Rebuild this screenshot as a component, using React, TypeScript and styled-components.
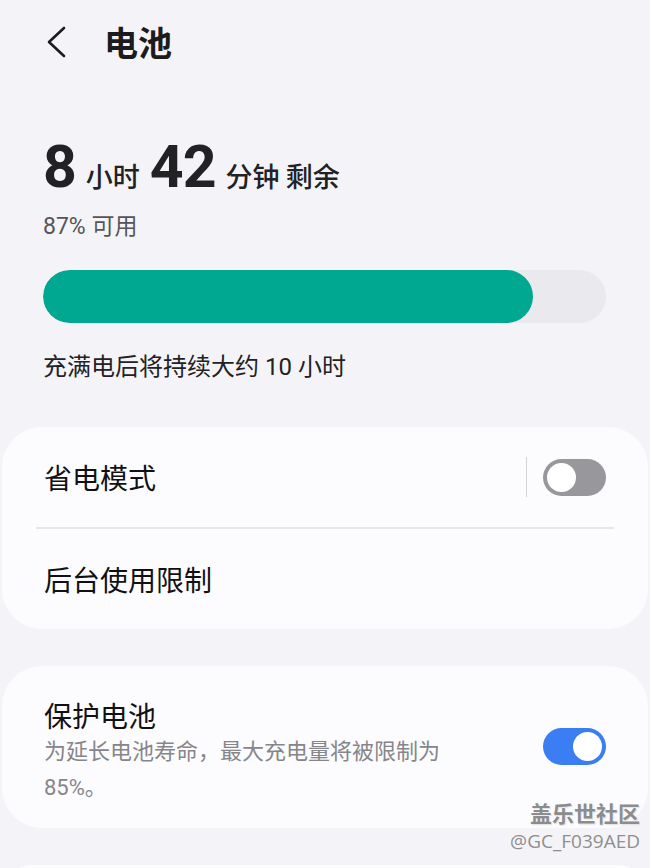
import styled, { createGlobalStyle } from 'styled-components';

const GlobalStyle = createGlobalStyle`
  html, body {
    margin: 0;
    padding: 0;
    background: #f4f4f8;
  }
  body {
    font-family: Roboto, "Noto Sans CJK SC", sans-serif;
    color: #1c1c1e;
  }
`;

type SwitchProps = {
  on?: boolean;
};

function Switch({ on }: SwitchProps) {
  return (
    <StyledSwitch on={on}>
      <StyledKnob on={on} />
    </StyledSwitch>
  );
}

function App() {
  return (
    <StyledPage>
      <GlobalStyle />
      <StyledHeader>
        <StyledBack aria-label="back">
          <svg width="24" height="32" viewBox="0 0 24 32">
            <path
              d="M20 2 L5 16 L20 30"
              fill="none"
              stroke="#1c1c1e"
              strokeWidth="2.6"
              strokeLinecap="round"
              strokeLinejoin="round"
            />
          </svg>
        </StyledBack>
        <StyledTitle>电池</StyledTitle>
      </StyledHeader>

      <StyledSummary>
        <StyledTime>
          <StyledNumber>8</StyledNumber>
          <StyledUnit>小时</StyledUnit>
          <StyledNumber>42</StyledNumber>
          <StyledUnit>分钟 剩余</StyledUnit>
        </StyledTime>
        <StyledAvailable>87% 可用</StyledAvailable>
        <StyledTrack>
          <StyledFill style={{ width: '87%' }} />
        </StyledTrack>
        <StyledEstimate>充满电后将持续大约 10 小时</StyledEstimate>
      </StyledSummary>

      <StyledCard>
        <StyledRow>
          <StyledLabel>省电模式</StyledLabel>
          <StyledControls>
            <StyledVDivider />
            <Switch />
          </StyledControls>
        </StyledRow>
        <StyledDivider />
        <StyledRow>
          <StyledLabel>后台使用限制</StyledLabel>
        </StyledRow>
      </StyledCard>

      <StyledCard>
        <StyledTallRow>
          <StyledTextBlock>
            <StyledLabel>保护电池</StyledLabel>
            <StyledHint>为延长电池寿命，最大充电量将被限制为 85%。</StyledHint>
          </StyledTextBlock>
          <StyledSwitchSlot>
            <Switch on />
          </StyledSwitchSlot>
        </StyledTallRow>
      </StyledCard>

      <StyledCard />

      <StyledWatermark>
        <StyledMarkTitle>盖乐世社区</StyledMarkTitle>
        <StyledMarkUser>@GC_F039AED</StyledMarkUser>
      </StyledWatermark>
    </StyledPage>
  );
}

const StyledPage = styled.div`
  position: relative;
  width: 650px;
  height: 868px;
  overflow: hidden;
  background: #f4f4f8;
`;

const StyledHeader = styled.div`
  display: flex;
  align-items: center;
  height: 44px;
  padding: 20px 0 0 44px;
`;

const StyledBack = styled.div`
  display: flex;
  width: 24px;
  margin-right: 36px;
`;

const StyledTitle = styled.h1`
  margin: 0;
  font-size: 34px;
  font-weight: 700;
  font-family: "Noto Sans CJK SC", sans-serif;
  line-height: 44px;
`;

const StyledSummary = styled.div`
  padding: 71px 44px 0 43px;
`;

const StyledTime = styled.div`
  display: flex;
  align-items: baseline;
  height: 64px;
  color: #222224;
`;

const StyledNumber = styled.span`
  font-size: 59px;
  font-weight: 700;
  font-family: Roboto, Inter, sans-serif;
  letter-spacing: -1px;
  line-height: 64px;
  margin-right: 10px;
`;

const StyledUnit = styled.span`
  font-size: 27px;
  font-weight: 500;
  font-family: "Noto Sans CJK SC", sans-serif;
  margin-right: 10px;
`;

const StyledAvailable = styled.div`
  margin-top: 14px;
  font-size: 23px;
  line-height: 28px;
  color: #555558;
  font-family: Roboto, "Noto Sans CJK SC", sans-serif;
`;

const StyledTrack = styled.div`
  margin-top: 29px;
  width: 563px;
  height: 53px;
  border-radius: 27px;
  background: #eaeaee;
  overflow: hidden;
`;

const StyledFill = styled.div`
  height: 100%;
  border-radius: 27px;
  background: #00a892;
`;

const StyledEstimate = styled.div`
  margin-top: 29px;
  font-size: 24px;
  line-height: 30px;
  color: #222224;
`;

const StyledCard = styled.div`
  margin: 45px 2px 0;
  background: #fcfcfe;
  border-radius: 40px;
  min-height: 60px;

  & + & {
    margin-top: 37px;
  }
`;

const StyledRow = styled.div`
  display: flex;
  align-items: center;
  justify-content: space-between;
  height: 100px;
  padding: 0 42px 0 42px;
`;

const StyledTallRow = styled.div`
  display: flex;
  align-items: center;
  justify-content: space-between;
  padding: 30px 42px 22px 42px;
`;

const StyledTextBlock = styled.div`
  display: flex;
  flex-direction: column;
  width: 410px;
`;

const StyledSwitchSlot = styled.div`
  display: flex;
  padding-bottom: 10px;
`;

const StyledLabel = styled.div`
  font-size: 28px;
  line-height: 38px;
  color: #111113;
  font-family: "Noto Sans CJK SC", sans-serif;
`;

const StyledHint = styled.div`
  font-size: 22px;
  line-height: 36px;
  color: #86868a;
  font-family: Roboto, "Noto Sans CJK SC", sans-serif;
`;

const StyledControls = styled.div`
  display: flex;
  align-items: center;
  gap: 16px;
`;

const StyledVDivider = styled.div`
  width: 1px;
  height: 40px;
  background: #d3d3d7;
`;

const StyledDivider = styled.div`
  height: 2px;
  margin: 0 34px;
  background: #e6e6ea;
`;

const StyledSwitch = styled.div<SwitchProps>`
  display: flex;
  align-items: center;
  justify-content: ${(p) => (p.on ? 'flex-end' : 'flex-start')};
  box-sizing: border-box;
  width: 63px;
  height: 37px;
  padding: 0 4px;
  border-radius: 19px;
  background: ${(p) => (p.on ? '#3b7df3' : '#98979c')};
  flex-shrink: 0;
`;

const StyledKnob = styled.div<SwitchProps>`
  width: 29px;
  height: 29px;
  border-radius: 50%;
  background: #ffffff;
`;

const StyledWatermark = styled.div`
  position: absolute;
  right: 10px;
  top: 796px;
  display: flex;
  flex-direction: column;
  align-items: flex-end;
  color: #8c8c8e;
  font-family: "Noto Sans CJK SC", sans-serif;
`;

const StyledMarkTitle = styled.div`
  font-size: 22px;
  font-weight: 700;
  line-height: 32px;
  text-shadow: 0 0 2px #ffffff, 1px 1px 1px #d8d8d8;
`;

const StyledMarkUser = styled.div`
  font-size: 19px;
  line-height: 26px;
  font-family: "Open Sans", Roboto, sans-serif;
  color: #8e8e90;
`;

export default App;
